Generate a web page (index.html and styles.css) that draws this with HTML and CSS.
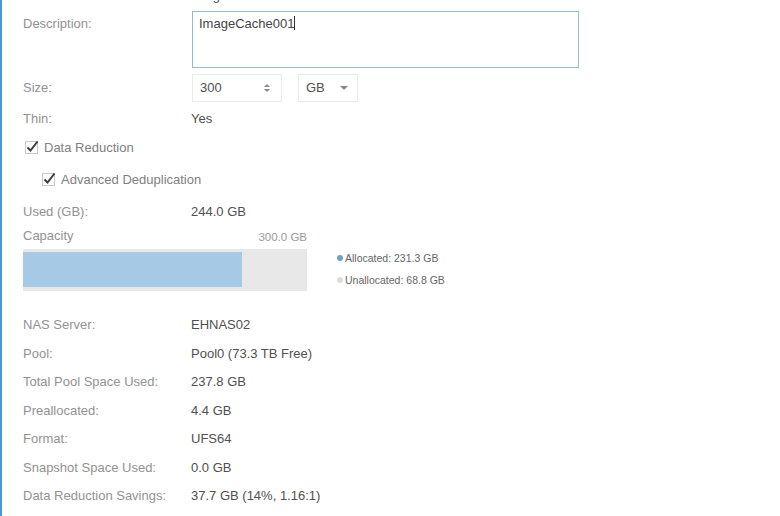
FILE: index.html
```html
<!DOCTYPE html>
<html lang="en">
<head>
  <meta charset="UTF-8" />
  <title>File System Properties</title>
  <link rel="stylesheet" href="styles.css">
</head>
<body>
<div class="panel">
  <div class="form">
    <div class="row name-row">
      <span class="label">Name:</span>
      <span class="value">ImageCache</span>
    </div>

    <div class="row desc-row">
      <span class="label desc-label">Description:</span>
      <div class="textarea">ImageCache001<span class="caret"></span></div>
    </div>

    <div class="row size-row">
      <span class="label">Size:</span>
      <div class="spinner">
        <span>300</span>
        <svg width="8" height="12" viewBox="0 0 8 12"><path d="M1 5 L4 2 L7 5 Z M1 7 L4 10 L7 7 Z" fill="#8a8a8a"/></svg>
      </div>
      <div class="select">
        <span>GB</span>
        <svg width="8" height="5" viewBox="0 0 8 5"><path d="M0 0 L8 0 L4 4 Z" fill="#8a8a8a"/></svg>
      </div>
    </div>

    <div class="row thin-row">
      <span class="label">Thin:</span>
      <span class="value">Yes</span>
    </div>

    <div class="check-row reduction">
      <svg class="cb" width="16" height="15" viewBox="0 0 16 15">
        <rect x="0.5" y="2.5" width="12" height="12" fill="#fff" stroke="#c8c8c8"/>
        <path d="M2.5 8.5 L5.5 11.5 L12.5 2.5" fill="none" stroke="#3c3c3c" stroke-width="2"/>
      </svg>
      <span>Data Reduction</span>
    </div>

    <div class="check-row dedup">
      <svg class="cb" width="16" height="15" viewBox="0 0 16 15">
        <rect x="0.5" y="2.5" width="12" height="12" fill="#fff" stroke="#c8c8c8"/>
        <path d="M2.5 8.5 L5.5 11.5 L12.5 2.5" fill="none" stroke="#3c3c3c" stroke-width="2"/>
      </svg>
      <span>Advanced Deduplication</span>
    </div>

    <div class="row used-row">
      <span class="label">Used (GB):</span>
      <span class="value">244.0 GB</span>
    </div>

    <div class="cap-row">
      <span class="label">Capacity</span>
      <span class="cap-total">300.0 GB</span>
    </div>

    <div class="bar-row">
      <div class="bar">
        <div class="bar-fill" style="width: 77.1%"></div>
      </div>
      <ul class="legend">
        <li><i class="dot dot-alloc"></i>Allocated: 231.3 GB</li>
        <li><i class="dot dot-free"></i>Unallocated: 68.8 GB</li>
      </ul>
    </div>

    <div class="details">
      <div class="row"><span class="label">NAS Server:</span><span class="value">EHNAS02</span></div>
      <div class="row"><span class="label">Pool:</span><span class="value">Pool0 (73.3 TB Free)</span></div>
      <div class="row"><span class="label">Total Pool Space Used:</span><span class="value">237.8 GB</span></div>
      <div class="row"><span class="label">Preallocated:</span><span class="value">4.4 GB</span></div>
      <div class="row"><span class="label">Format:</span><span class="value">UFS64</span></div>
      <div class="row"><span class="label">Snapshot Space Used:</span><span class="value">0.0 GB</span></div>
      <div class="row"><span class="label">Data Reduction Savings:</span><span class="value">37.7 GB (14%, 1.16:1)</span></div>
    </div>
  </div>
</div>
</body>
</html>
```

FILE: styles.css
```css
html, body { margin: 0; background: #fff; }
body { font-family: "Liberation Sans", Arial, sans-serif; font-size: 13px; color: #505050; }

.panel {
  height: 516px;
  overflow: hidden;
  border-left: 2px solid #4a97d2;
  padding-left: 21px;
  box-sizing: border-box;
}
.form { margin-top: -12px; }

.row { display: flex; line-height: 16px; }
.label { width: 168px; flex: none; color: #929292; }
.value { color: #505050; }

.name-row { height: 16px; }
.desc-row { margin-top: 7px; }
.desc-label { padding-top: 5px; }
.textarea {
  width: 387px; height: 57px;
  margin-left: 1px;
  box-sizing: border-box;
  border: 1px solid #8fbdd6;
  padding: 4px 6px;
  color: #444;
}
.caret { display: inline-block; width: 1px; height: 14px; background: #333; vertical-align: -2px; }

.size-row { margin-top: 6px; height: 28px; line-height: 28px; }
.spinner, .select {
  height: 28px; box-sizing: border-box;
  border: 1px solid #ebebeb;
  display: flex; align-items: center; justify-content: space-between;
  color: #505050;
}
.spinner { width: 90px; margin-left: 1px; padding: 0 10px 0 7px; }
.select { width: 60px; margin-left: 16px; padding: 0 9px 0 7px; }

.thin-row { margin-top: 9px; }

.check-row { display: flex; align-items: center; height: 16px; line-height: 16px; color: #808080; }
.check-row .cb { margin-right: 3px; margin-top: -3px; }
.reduction { margin-top: 13px; padding-left: 2px; }
.dedup { margin-top: 16px; padding-left: 19px; }

.used-row { margin-top: 16px; }

.cap-row { margin-top: 8px; display: flex; width: 284px; justify-content: space-between; line-height: 16px; }
.cap-total { font-size: 11.5px; color: #9a9a9a; padding-top: 1px; }

.bar-row { margin-top: 4px; display: flex; }
.bar {
  width: 284px; height: 42px;
  background: #e8e8e8;
  padding: 3px 0 4px;
  box-sizing: border-box;
}
.bar-fill { height: 100%; background: #a6c9e5; }

.legend { list-style: none; margin: -2px 0 0 30px; padding: 0; font-size: 10.5px; color: #666; }
.legend li { display: flex; align-items: center; height: 22px; }
.dot { display: inline-block; width: 6px; height: 6px; border-radius: 50%; margin-right: 2px; }
.dot-alloc { background: #6fa0c8; }
.dot-free { background: #dcdcdc; }

.details { margin-top: 20px; }
.details .row { line-height: 28.5px; height: 28.5px; }
```
